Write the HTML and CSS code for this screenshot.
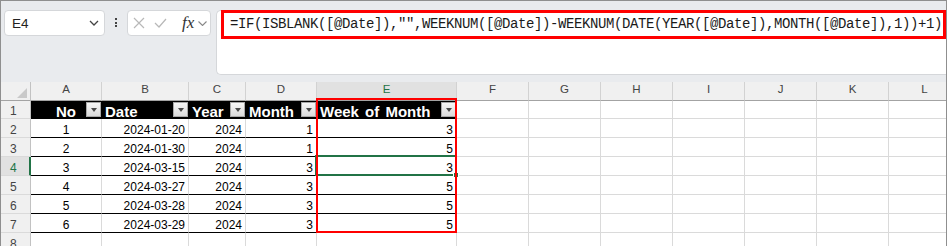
FILE: index.html
```html
<!DOCTYPE html>
<html lang="en">
<head>
    <meta charset="UTF-8">
    <title>Week of Month</title>
    <link rel="stylesheet" href="styles.css">
</head>
<body>
    <div class="window">
        <!-- Barra de fórmulas -->
        <div class="toolbar">
            <div class="name-box">
                <span>E4</span>
                <svg width="10" height="6" viewBox="0 0 10 6"><path d="M1 1 L5 5 L9 1" fill="none" stroke="#444" stroke-width="1.3"/></svg>
            </div>
            <div class="dots"><i></i><i></i><i></i></div>
            <div class="fx-box">
                <svg class="ic-x" width="12" height="12" viewBox="0 0 12 12"><path d="M1 1 L11 11 M11 1 L1 11" fill="none" stroke="#b8b8b8" stroke-width="1.2"/></svg>
                <svg class="ic-ok" width="13" height="10" viewBox="0 0 13 10"><path d="M1 5 L5 9 L12 1" fill="none" stroke="#b8b8b8" stroke-width="1.2"/></svg>
                <span class="fx">fx</span>
                <svg class="ic-down" width="9" height="5" viewBox="0 0 9 5"><path d="M0.5 0.5 L4.5 4.5 L8.5 0.5" fill="none" stroke="#888" stroke-width="1.1"/></svg>
            </div>
            <div class="formula">
                <div class="formula-text">=IF(ISBLANK([@Date]),"",WEEKNUM([@Date])-WEEKNUM(DATE(YEAR([@Date]),MONTH([@Date]),1))+1)</div>
            </div>
        </div>

        <!-- Hoja -->
        <div class="sheet">
            <div class="row col-heads">
                <div class="corner"><span class="tri"></span></div>
                <div>A</div><div>B</div><div>C</div><div>D</div><div class="active">E</div>
                <div>F</div><div>G</div><div>H</div><div>I</div><div>J</div><div>K</div><div>L</div>
            </div>

            <div class="row first">
                <div class="rh">1</div>
                <div class="th"><span class="lbl c">No</span><span class="fbtn"></span></div>
                <div class="th"><span class="lbl">Date</span><span class="fbtn"></span></div>
                <div class="th"><span class="lbl">Year</span><span class="fbtn"></span></div>
                <div class="th"><span class="lbl">Month</span><span class="fbtn"></span></div>
                <div class="th"><span class="lbl wide">Week of Month</span><span class="fbtn"></span></div>
                <div></div><div></div><div></div><div></div><div></div><div></div><div></div>
            </div>

            <div class="row">
                <div class="rh">2</div>
                <div class="td c">1</div><div class="td r">2024-01-20</div><div class="td r">2024</div><div class="td r">1</div><div class="td r">3</div>
                <div></div><div></div><div></div><div></div><div></div><div></div><div></div>
            </div>
            <div class="row">
                <div class="rh">3</div>
                <div class="td c">2</div><div class="td r">2024-01-30</div><div class="td r">2024</div><div class="td r">1</div><div class="td r">5</div>
                <div></div><div></div><div></div><div></div><div></div><div></div><div></div>
            </div>
            <div class="row">
                <div class="rh active">4</div>
                <div class="td c">3</div><div class="td r">2024-03-15</div><div class="td r">2024</div><div class="td r">3</div><div class="td r">3</div>
                <div></div><div></div><div></div><div></div><div></div><div></div><div></div>
            </div>
            <div class="row">
                <div class="rh">5</div>
                <div class="td c">4</div><div class="td r">2024-03-27</div><div class="td r">2024</div><div class="td r">3</div><div class="td r">5</div>
                <div></div><div></div><div></div><div></div><div></div><div></div><div></div>
            </div>
            <div class="row">
                <div class="rh">6</div>
                <div class="td c">5</div><div class="td r">2024-03-28</div><div class="td r">2024</div><div class="td r">3</div><div class="td r">5</div>
                <div></div><div></div><div></div><div></div><div></div><div></div><div></div>
            </div>
            <div class="row">
                <div class="rh">7</div>
                <div class="td c">6</div><div class="td r">2024-03-29</div><div class="td r">2024</div><div class="td r">3</div><div class="td r">5</div>
                <div></div><div></div><div></div><div></div><div></div><div></div><div></div>
            </div>
            <div class="row">
                <div class="rh">8</div>
                <div></div><div></div><div></div><div></div><div></div>
                <div></div><div></div><div></div><div></div><div></div><div></div><div></div>
            </div>

            <!-- Celda activa y marco rojo -->
            <div class="selection"><span class="handle"></span></div>
            <div class="highlight"></div>
        </div>
    </div>
</body>
</html>
```

FILE: styles.css
```css
* {
    box-sizing: border-box;
}

body {
    margin: 0;
    background-color: #ffffff;
    font-family: 'Liberation Sans', Arial, sans-serif;
}

.window {
    width: 947px;
    height: 246px;
    overflow: hidden;
    border: 1px solid #8f8f8f;
    border-bottom: none;
    background-color: #ffffff;
}

/* Barra de fórmulas */
.toolbar {
    height: 81px;
    background-color: #e9ebee;
    display: flex;
    align-items: flex-start;
    padding: 9px 0 0 3px;
}

.name-box {
    width: 101px;
    height: 26px;
    background-color: #ffffff;
    border: 1px solid #d5d7da;
    border-radius: 4px;
    display: flex;
    align-items: center;
    justify-content: space-between;
    padding: 0 5px 0 7px;
    font-size: 13.5px;
    color: #222222;
}

.dots {
    width: 22px;
    display: flex;
    flex-direction: column;
    align-items: center;
    gap: 1.5px;
    margin-top: 8px;
}

.dots i {
    width: 2px;
    height: 2px;
    background-color: #444444;
}

.fx-box {
    width: 84px;
    height: 26px;
    background-color: #ffffff;
    border: 1px solid #d5d7da;
    border-radius: 4px;
    display: flex;
    align-items: center;
    padding-left: 5px;
}

.ic-ok {
    margin-left: 9px;
}

.fx {
    margin-left: 15px;
    font-family: 'Liberation Serif', 'Times New Roman', serif;
    font-style: italic;
    font-size: 17px;
    color: #333333;
}

.ic-down {
    margin-left: 4px;
}

.formula {
    flex: 1;
    height: 65px;
    margin-left: 5px;
    background-color: #ffffff;
    border: 1px solid #d5d7da;
    border-right: none;
    border-radius: 5px 0 0 5px;
    padding-left: 4px;
}

.formula-text {
    margin-top: -1px;
    height: 29px;
    border: 3px solid #ff0000;
    padding-left: 6px;
    font-family: 'Liberation Mono', 'Courier New', monospace;
    font-size: 14px;
    letter-spacing: -0.4px;
    line-height: 23px;
    color: #1a1a1a;
    white-space: nowrap;
    overflow: hidden;
}

/* Hoja */
.sheet {
    position: relative;
}

.row {
    display: grid;
    grid-template-columns: 30px 71px 87px 57px 71px 140px repeat(7, 72px);
    height: 19px;
}

.row.first {
    height: 18px;
}

.row > div {
    border-right: 1px solid #dadada;
    border-bottom: 1px solid #dadada;
    overflow: hidden;
    white-space: nowrap;
}

.col-heads > div {
    background-color: #f0f0f0;
    border-right-color: #d2d2d2;
    border-bottom-color: #a3a3a3;
    text-align: center;
    font-size: 11.5px;
    line-height: 15px;
    color: #444444;
}

.col-heads > div.active {
    background-color: #e1e1e1;
    color: #217346;
}

.col-heads > .corner {
    display: flex;
    justify-content: flex-end;
    align-items: flex-end;
    padding: 0 3px 2px 0;
    border-right-color: #c2c2c2;
}

.tri {
    width: 10px;
    height: 10px;
    background-color: #c9c9c9;
    clip-path: polygon(100% 0, 100% 100%, 0 100%);
}

.row > .rh {
    background-color: #f0f0f0;
    border-right-color: #c2c2c2;
    color: #444444;
    font-size: 12px;
    line-height: 13px;
    padding-left: 9px;
    display: flex;
    align-items: flex-end;
}

.row > .rh.active {
    background-color: #e1e1e1;
    color: #217346;
    border-right: 2px solid #217346;
}

/* Encabezados de la tabla */
.row > .th {
    background-color: #000000;
    border-right-color: #000000;
    border-bottom-color: #000000;
    color: #ffffff;
    font-weight: bold;
    font-size: 15px;
    display: flex;
}

.lbl {
    flex: 1;
    align-self: flex-end;
    line-height: 13px;
    padding-left: 3px;
}

.lbl.c {
    text-align: center;
    padding-left: 15px;
}

.lbl.wide {
    word-spacing: 2px;
}

.fbtn {
    align-self: center;
    width: 15px;
    height: 15px;
    background: linear-gradient(#f7f7f7, #dadada);
    border: 1px solid #a9a9a9;
    display: flex;
    align-items: center;
    justify-content: center;
}

.fbtn::after {
    content: '';
    border-left: 3.5px solid transparent;
    border-right: 3.5px solid transparent;
    border-top: 4px solid #4a4a4a;
}

/* Datos */
.row > .td {
    border-bottom-color: #000000;
    font-size: 12px;
    line-height: 13px;
    color: #000000;
    padding: 0 3px;
    display: flex;
    align-items: flex-end;
}

.td.r {
    justify-content: flex-end;
}

.td.c {
    justify-content: center;
}

/* Selección */
.selection {
    position: absolute;
    left: 314px;
    top: 73px;
    width: 142px;
    height: 21px;
    border: 2px solid #217346;
}

.handle {
    position: absolute;
    right: -4px;
    bottom: -4px;
    width: 6px;
    height: 6px;
    background-color: #217346;
    border: 1px solid #ffffff;
}

.highlight {
    position: absolute;
    left: 315px;
    top: 16px;
    width: 141px;
    height: 135px;
    border: 2px solid #ff0000;
}
```
